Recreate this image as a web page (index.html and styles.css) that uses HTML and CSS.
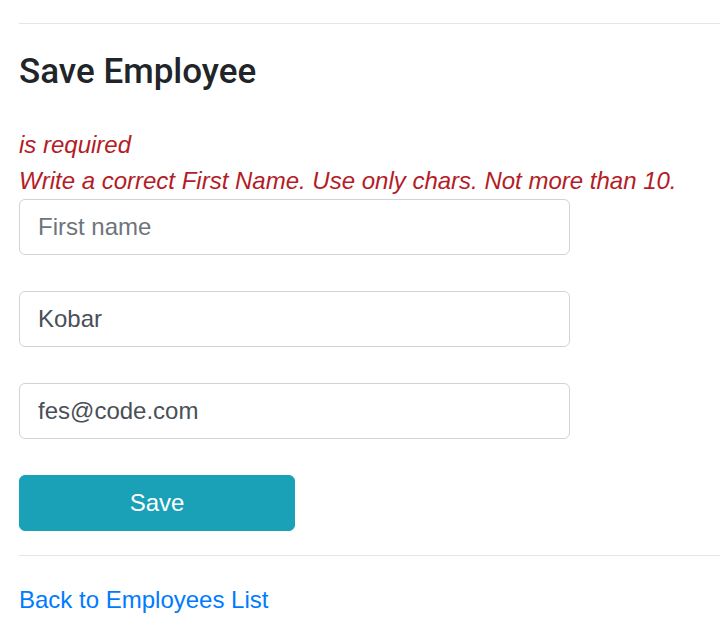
FILE: index.html
```html
<!DOCTYPE html>
<html lang="en">
<head>
<meta charset="utf-8">
<title>Save Employee</title>
<link rel="stylesheet" href="styles.css">
</head>
<body>
<main class="page">
  <hr class="rule">
  <h1 class="title">Save Employee</h1>
  <form class="form">
    <div class="group">
      <div class="errors">
        <div class="error">is required</div>
        <div class="error">Write a correct First Name. Use only chars. Not more than 10.</div>
      </div>
      <input class="field" type="text" placeholder="First name">
    </div>
    <input class="field" type="text" value="Kobar">
    <input class="field" type="text" value="fes@code.com">
    <button class="btn" type="button">Save</button>
  </form>
  <hr class="rule rule-bottom">
  <a class="link" href="#">Back to Employees List</a>
</main>
</body>
</html>
```

FILE: styles.css
```css
html, body {
  margin: 0;
  padding: 0;
  background: #ffffff;
}

.page {
  padding: 23px 0 0 19px;
  font-family: "Liberation Sans", Arial, sans-serif;
  font-size: 24px;
  line-height: 36px;
  color: #212529;
}

.rule {
  margin: 0;
  border: 0;
  border-top: 1px solid rgba(0, 0, 0, 0.1);
  height: 0;
}

.rule-bottom {
  margin-top: 24px;
}

.title {
  margin: 26px 0 34px 0;
  font-family: Roboto, "Liberation Sans", sans-serif;
  font-weight: 500;
  font-size: 35px;
  line-height: 43px;
  color: #212529;
}

.form {
  display: flex;
  flex-direction: column;
  align-items: flex-start;
  gap: 36px;
}

.group {
  display: flex;
  flex-direction: column;
}

.errors {
  display: flex;
  flex-direction: column;
}

.error {
  font-style: italic;
  color: #b31d27;
  white-space: nowrap;
}

.field {
  box-sizing: border-box;
  width: 551px;
  height: 56px;
  margin: 0;
  padding: 0 18px;
  border: 1px solid #ced4da;
  border-radius: 6px;
  background: #ffffff;
  font-family: "Liberation Sans", Arial, sans-serif;
  font-size: 24px;
  color: #495057;
  outline: none;
}

.field::placeholder {
  color: #6c757d;
  opacity: 1;
}

.btn {
  box-sizing: border-box;
  width: 276px;
  height: 56px;
  margin: 0;
  padding: 0;
  border: 1px solid #17a2b8;
  border-radius: 6px;
  background: #1aa1b7;
  color: #ffffff;
  font-family: "Liberation Sans", Arial, sans-serif;
  font-size: 24px;
  cursor: pointer;
}

.link {
  display: block;
  margin-top: 26px;
  color: #007bff;
  text-decoration: none;
}
```
